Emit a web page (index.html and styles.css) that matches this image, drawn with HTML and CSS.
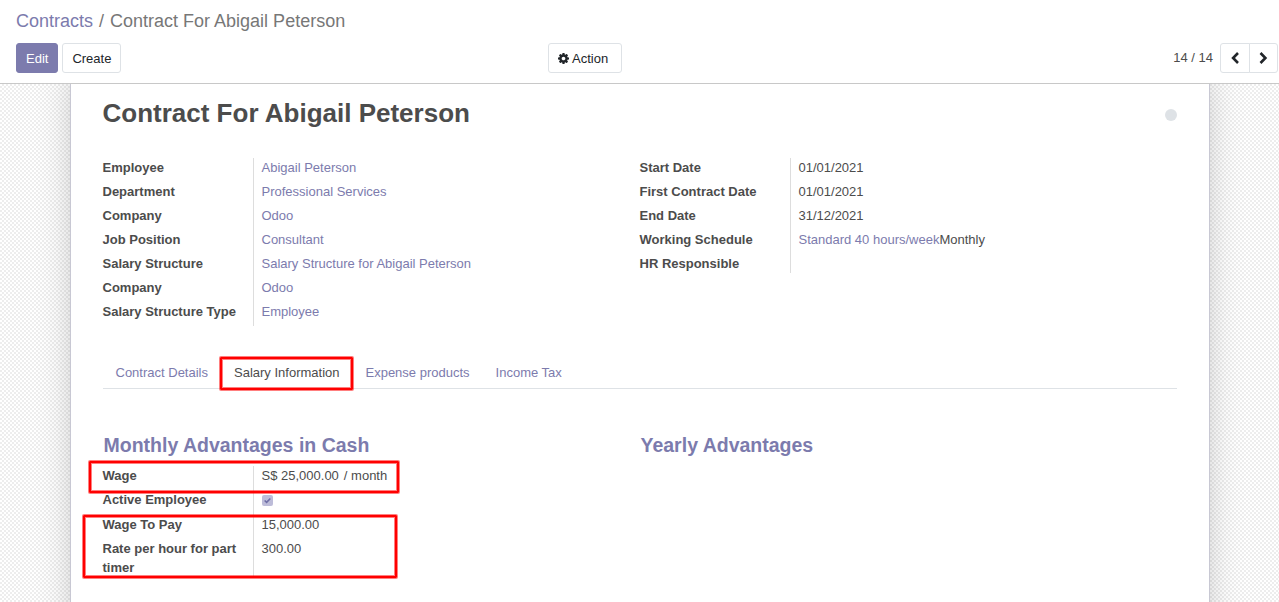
FILE: index.html
```html
<!DOCTYPE html>
<html lang="en">
<head>
<meta charset="utf-8">
<title>Contract For Abigail Peterson</title>
<link rel="stylesheet" href="styles.css">
</head>
<body>
<header class="control-panel">
  <div class="breadcrumb"><a>Contracts</a><span class="sep">/</span><span>Contract For Abigail Peterson</span></div>
  <div class="toolbar">
    <div class="buttons"><button class="btn primary">Edit</button><button class="btn">Create</button></div>
    <button class="btn action"><svg class="gear" viewBox="0 0 1536 1536"><path fill="currentColor" fill-rule="evenodd" d="M1024 768q0-106-75-181t-181-75-181 75-75 181 75 181 181 75 181-75 75-181zM1536 659v222q0 12-8 23t-20 13l-185 28q-19 54-39 91 35 50 107 138 10 12 10 25t-9 23q-27 37-99 108t-94 71q-12 0-26-9l-138-108q-44 23-91 38-16 136-29 186-7 28-36 28h-222q-14 0-24.500-8.500t-11.500-21.500l-28-184q-49-16-90-37l-141 107q-10 9-25 9-14 0-25-11-126-114-165-168-7-10-7-23 0-12 8-23 15-21 51-66.500t54-70.500q-27-50-41-99l-183-27q-13-2-21-12.500t-8-23.500v-222q0-12 8-23t19-13l186-28q14-46 39-92-40-57-107-138-10-12-10-24 0-10 9-23 26-36 98.500-107.500t94.500-71.500q13 0 26 10l138 107q44-23 91-38 16-136 29-186 7-28 36-28h222q14 0 24.500 8.500t11.500 21.500l28 184q49 16 90 37l142-107q9-9 24-9 13 0 25 10 129 119 165 170 7 8 7 22 0 12-8 23-15 21-51 66.500t-54 70.500q26 50 41 98l183 28q13 2 21 12.500t8 23.500z"/></svg>Action</button>
    <div class="pager"><span>14 / 14</span><div class="pager-buttons">
      <button class="btn" aria-label="Previous"><svg viewBox="0 0 10 14"><path d="M8 2 3.100 7 8 12"/></svg></button>
      <button class="btn" aria-label="Next"><svg viewBox="0 0 10 14"><path d="M1.500 2l4.900 5-4.900 5"/></svg></button>
    </div></div>
  </div>
</header>
<main class="form-view">
  <section class="sheet">
    <div class="title-row"><h1>Contract For Abigail Peterson</h1><span class="state"></span></div>
    <div class="columns main-fields">
      <dl class="group">
        <dt>Employee</dt><dd><a>Abigail Peterson</a></dd>
        <dt>Department</dt><dd><a>Professional Services</a></dd>
        <dt>Company</dt><dd><a>Odoo</a></dd>
        <dt>Job Position</dt><dd><a>Consultant</a></dd>
        <dt>Salary Structure</dt><dd><a>Salary Structure for Abigail Peterson</a></dd>
        <dt>Company</dt><dd><a>Odoo</a></dd>
        <dt>Salary Structure Type</dt><dd><a>Employee</a></dd>
      </dl>
      <dl class="group">
        <dt>Start Date</dt><dd>01/01/2021</dd>
        <dt>First Contract Date</dt><dd>01/01/2021</dd>
        <dt>End Date</dt><dd>31/12/2021</dd>
        <dt>Working Schedule</dt><dd><a>Standard 40 hours/week</a>Monthly</dd>
        <dt class="last">HR Responsible</dt><dd class="last"></dd>
      </dl>
    </div>
    <nav class="tabs"><a>Contract Details</a><a class="active">Salary Information</a><a>Expense products</a><a>Income Tax</a></nav>
    <div class="columns">
      <div>
        <h2>Monthly Advantages in Cash</h2>
        <dl class="group">
          <dt>Wage</dt><dd>S$ 25,000.00<span class="unit">/ month</span></dd>
          <dt class="check-row">Active Employee</dt><dd class="check-row"><span class="checkbox"><svg viewBox="0 0 10 10"><path d="M2.400 5 4.200 6.700 7.600 3.200"/></svg></span></dd>
          <dt>Wage To Pay</dt><dd>15,000.00</dd>
          <dt class="last">Rate per hour for part timer</dt><dd class="last">300.00</dd>
        </dl>
      </div>
      <div><h2>Yearly Advantages</h2></div>
    </div>
  </section>
</main>
<div class="mark mark-tab"></div>
<div class="mark mark-wage"></div>
<div class="mark mark-pay"></div>
</body>
</html>
```
FILE: styles.css
```css
* { box-sizing: border-box; }
body {
  margin: 0;
  height: 602px;
  overflow: hidden;
  position: relative;
  display: flex;
  flex-direction: column;
  font: 13px/19.5px "Liberation Sans", Arial, sans-serif;
  color: #4c4c4c;
  background: #fff;
}
a { color: #7c7bad; text-decoration: none; }
h1, h2, dl, dd { margin: 0; }
.control-panel {
  flex: none;
  height: 84px;
  padding: 8px 1px 0 16px;
  border-bottom: 1px solid #c8c8c8;
}
.breadcrumb { font-size: 18px; line-height: 27px; color: #777; }
.sep { padding: 0 6px; }
.toolbar {
  display: grid;
  grid-template-columns: 532px auto 1fr;
  align-items: center;
  margin-top: 8px;
}
.buttons { display: flex; gap: 4px; }
.btn {
  height: 30px;
  padding: 2px 9px 0;
  border: 1px solid #dee2e6;
  border-radius: 3px;
  background: #fff;
  color: #212529;
  font: 13px/20px "Liberation Sans", Arial, sans-serif;
}
.btn.primary { background: #7c7bad; border-color: #7c7bad; color: #fff; }
.action { display: flex; align-items: center; width: 74px; white-space: nowrap; }
.gear { width: 11px; height: 11px; margin: -1px 3px 0 0; flex: none; }
.pager { display: flex; align-items: center; justify-content: flex-end; gap: 7px; }
.pager-buttons { display: flex; }
.pager-buttons .btn { width: 30px; padding: 0; display: flex; align-items: center; justify-content: center; }
.pager-buttons .btn:first-child { border-radius: 3px 0 0 3px; }
.pager-buttons .btn:last-child { width: 29px; margin-left: -1px; border-radius: 0 3px 3px 0; }
.pager-buttons svg { width: 10px; height: 14px; fill: none; stroke: currentColor; stroke-width: 2.6; }
.form-view {
  flex: 1;
  min-height: 0;
  overflow: hidden;
  background: repeating-conic-gradient(#ededed 0 25%, #fff 0 50%) 0 0 / 4px 4px;
}
.sheet {
  width: 1140px;
  height: 700px;
  margin: -30px auto 0;
  padding: 41px 32px 0;
  border: 1px solid #c8c8d3;
  box-shadow: 0 5px 40px -15px rgba(0, 0, 0, .4);
  background: #fff;
}
.title-row { display: flex; justify-content: space-between; align-items: center; height: 35px; }
h1 { font-size: 26px; line-height: 35px; }
.state { width: 12px; height: 12px; border-radius: 50%; background: #dee2e6; position: relative; top: 1px; }
.columns { display: grid; grid-template-columns: 1fr 1fr; }
.main-fields { margin-top: 27px; align-items: start; }
.group { display: grid; grid-template-columns: 150px 1fr; }
dt { font-weight: bold; padding: 0 10px 4.5px 0; }
dd { min-height: 19px; padding: 0 0 4.5px 8px; border-left: 1px solid #ddd; }
.unit { margin-left: 5px; }
.tabs { display: flex; height: 32px; margin-top: 31px; border-bottom: 1px solid #dee2e6; }
.tabs a { padding: 6px 13px 0; }
.tabs .active { color: #4c4c4c; }
h2 { margin: 41px 0 6px 1px; font-size: 19.5px; line-height: 30px; color: #7c7bad; }
.check-row { height: 24.5px; }
.last { padding-bottom: 0; line-height: 19px; }
.checkbox {
  display: block;
  width: 11px;
  height: 11px;
  margin: 4.5px 0 0 .5px;
  border-radius: 2px;
  background: #bdbcd9;
}
.checkbox svg { display: block; width: 11px; height: 11px; fill: none; stroke: #6f6ea6; stroke-width: 1.4; }
.mark {
  position: absolute;
  border: 2px solid #f00;
  border-radius: 1px;
  box-shadow: 0 0 0 1px rgba(255, 0, 0, .5), inset 0 0 0 1px rgba(255, 0, 0, .5);
}
.mark-tab { left: 220px; top: 357px; width: 133px; height: 33px; }
.mark-wage { left: 89px; top: 461px; width: 310px; height: 32px; }
.mark-pay { left: 83px; top: 515px; width: 314px; height: 63px; }
```
